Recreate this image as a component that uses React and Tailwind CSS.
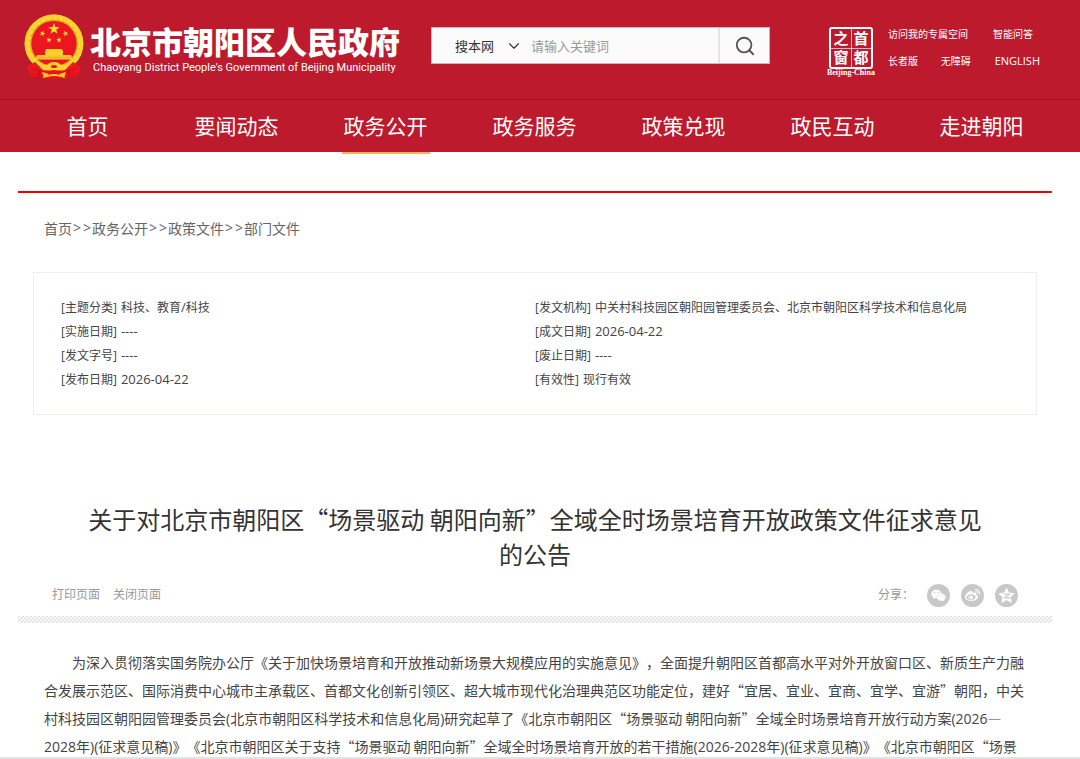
import { Search, ChevronDown } from "lucide-react";
import { FaWeixin, FaWeibo } from "react-icons/fa";

const NAV = ["首页", "要闻动态", "政务公开", "政务服务", "政策兑现", "政民互动", "走进朝阳"];
const CRUMBS = ["首页", "政务公开", "政策文件", "部门文件"];

const INFO_LEFT = [
  ["主题分类", "科技、教育/科技"],
  ["实施日期", "----"],
  ["发文字号", "----"],
  ["发布日期", "2026-04-22"],
];
const INFO_RIGHT = [
  ["发文机构", "中关村科技园区朝阳园管理委员会、北京市朝阳区科学技术和信息化局"],
  ["成文日期", "2026-04-22"],
  ["废止日期", "----"],
  ["有效性", "现行有效"],
];

const BODY =
  "为深入贯彻落实国务院办公厅《关于加快场景培育和开放推动新场景大规模应用的实施意见》，全面提升朝阳区首都高水平对外开放窗口区、新质生产力融合发展示范区、国际消费中心城市主承载区、首都文化创新引领区、超大城市现代化治理典范区功能定位，建好“宜居、宜业、宜商、宜学、宜游”朝阳，中关村科技园区朝阳园管理委员会(北京市朝阳区科学技术和信息化局)研究起草了《北京市朝阳区“场景驱动 朝阳向新”全域全时场景培育开放行动方案(2026—2028年)(征求意见稿)》《北京市朝阳区关于支持“场景驱动 朝阳向新”全域全时场景培育开放的若干措施(2026-2028年)(征求意见稿)》《北京市朝阳区“场景";

// Latin runs get Open Sans, everything else (curly quotes included) stays full width
function Mixed({ text, latin = "" }) {
  return text.split(/([\x21-\x7e]+)/).map((part, i) =>
    i % 2 ? (
      <span key={i} className={`font-['Open_Sans','Noto_Sans_CJK_SC',sans-serif] leading-none ${latin}`}>{part}</span>
    ) : (
      part
    )
  );
}

function Star({ x, y, r, rot = 0 }) {
  const pts = Array.from({ length: 10 }, (_, i) => {
    const a = ((i * 36 - 90 + rot) * Math.PI) / 180;
    const d = i % 2 ? r * 0.4 : r;
    return `${(x + d * Math.cos(a)).toFixed(2)},${(y + d * Math.sin(a)).toFixed(2)}`;
  }).join(" ");
  return <polygon points={pts} fill="#fbd931" />;
}

function Emblem() {
  return (
    <svg viewBox="0 0 60 66" className="w-[60px] h-[66px] shrink-0" aria-hidden="true">
      <ellipse cx="30" cy="29.5" rx="29.5" ry="29" fill="#e3a922" />
      <ellipse cx="30" cy="29.5" rx="27.5" ry="27.3" fill="none" stroke="#f9d22e" strokeWidth="3.5" />
      <ellipse cx="30" cy="29.5" rx="25" ry="25" fill="none" stroke="#fbd93a" strokeWidth="2" strokeDasharray="5 .8" />
      <circle cx="30" cy="29.5" r="22.6" fill="#ec1620" />
      <path d="M3 53 L11 48 L20 57 L14 62 L7 62 Z" fill="#ec1620" />
      <path d="M57 53 L49 48 L40 57 L46 62 L53 62 Z" fill="#ec1620" />
      <path d="M7 52 Q16 58 30 56 Q44 58 53 52 L52 63 Q46 61 41 65 H19 Q14 61 8 63 Z" fill="#e8111c" />
      <path d="M11 45 Q17 53 30 50 Q43 53 49 45 Q44 57 30 54 Q16 57 11 45 Z" fill="#fbd02d" />
      <path d="M10 55 L16 57 L14 63 M50 55 L44 57 L46 63" fill="none" stroke="#b80f19" strokeWidth=".8" />
      <path d="M18 58 L25 60 L20 64 Z M42 58 L35 60 L40 64 Z" fill="#fbd02d" />
      <path d="M18 64 Q30 56 42 64 L37 63 Q30 61 23 63 Z" fill="#fbd02d" />
      <ellipse cx="30" cy="52" rx="7" ry="4" fill="#fbd02d" />
      <ellipse cx="30" cy="52.5" rx="3" ry="1.5" fill="#e8111c" />
      <path d="M22 35 H38 L39 37.5 H21 Z M21 37 H39 V41 H21 Z" fill="#fbd02d" />
      <path d="M13 41 H47 L49 45.5 H11 Z" fill="#f9c928" />
      <path d="M12 43.4 H48" stroke="#e79b1c" strokeWidth=".6" />
      <Star x={30} y={15} r={6} />
      <Star x={18.5} y={19.5} r={3} rot={20} />
      <Star x={41.5} y={19.5} r={3} rot={-20} />
      <Star x={25} y={26} r={3} rot={10} />
      <Star x={35} y={26} r={3} rot={-10} />
    </svg>
  );
}

function CapitalWindow() {
  return (
    <a href="#" className="w-[50px] shrink-0 flex flex-col items-center">
      <span className="relative w-[44px] h-[42px] border-2 border-white rounded-[3px] grid grid-cols-2 grid-rows-2 text-center text-[15px] leading-[18px] font-bold">
        <span>之</span>
        <span>首</span>
        <span>窗</span>
        <span>都</span>
        <span className="absolute left-1/2 top-0 h-full w-px bg-white/70" />
        <span className="absolute top-1/2 left-0 w-full h-px bg-white/70" />
      </span>
      <span className="font-['Liberation_Serif',serif] font-bold text-[8px] leading-[8px] whitespace-nowrap">Beijing-China</span>
    </a>
  );
}

function QzoneIcon() {
  return (
    <svg viewBox="0 0 24 24" className="w-[17px] h-[17px]" aria-hidden="true">
      <path
        d="M12 1.5l3.2 7 7.6.8-5.7 5.1 1.7 7.6-6.8-3.9-6.8 3.9 1.7-7.6L1.2 9.3l7.6-.8z"
        fill="#fff"
        stroke="#fff"
        strokeLinejoin="round"
      />
      <path d="M8 10.2q4-1 8 0l-6.500 5q4 .6 7.5-.2" fill="none" stroke="#c8c8c8" strokeWidth="1.5" />
    </svg>
  );
}

function InfoColumn({ rows }) {
  return (
    <ul>
      {rows.map(([label, value]) => (
        <li key={label} className="flex gap-[4px] h-[24px] whitespace-nowrap">
          <span><Mixed text={`[${label}]`} /></span>
          <span><Mixed text={value} latin="text-[13px]" /></span>
        </li>
      ))}
    </ul>
  );
}

function ShareButton({ label, children }) {
  return (
    <button aria-label={label} className="w-[23px] h-[23px] rounded-full bg-[#c8c8c8] text-white flex items-center justify-center">
      {children}
    </button>
  );
}

function Header() {
  return (
    <header className="bg-[#bd1a2d] text-white shrink-0">
      <div className="h-[99px] flex items-start pl-[24px] pr-[40px]">
        <a href="#" className="flex mt-[14px] gap-[6px]">
          <Emblem />
          <span className="flex flex-col mt-[8px] whitespace-nowrap">
            <span className="text-[31px] leading-[38px] font-black">北京市朝阳区人民政府</span>
            <span className="pl-[3px] font-['Roboto',sans-serif] text-[11px] leading-[16px]">
              Chaoyang District People's Government of Beijing Municipality
            </span>
          </span>
        </a>

        <form className="mt-[27px] ml-[31px] w-[339px] h-[37px] flex bg-[#fbfbfb] border border-[#d9b0b4] text-[13px]" onSubmit={(e) => e.preventDefault()}>
          <div className="relative w-[99px] shrink-0">
            <select aria-label="搜索范围" className="w-full h-full appearance-none bg-transparent pl-[23px] text-[#333] outline-none">
              <option>搜本网</option>
            </select>
            <ChevronDown className="absolute right-[8px] top-[9px] w-[18px] h-[18px] text-[#333] pointer-events-none" strokeWidth={1.5} />
          </div>
          <input type="text" aria-label="关键词" placeholder="请输入关键词" className="flex-1 min-w-0 bg-transparent text-[#333] placeholder:text-[#999] outline-none" />
          <button aria-label="搜索" className="w-[51px] border-l-2 border-[#e3e3e3] text-[#555] flex items-center justify-center">
            <Search className="w-[22px] h-[22px]" strokeWidth={2} />
          </button>
        </form>

        <div className="ml-auto mt-[27px] flex gap-[12px]">
          <CapitalWindow />
          <div className="w-[152px] text-[10px] leading-[14px] flex flex-col gap-[13px] whitespace-nowrap">
            <div className="flex">
              <a href="#" className="w-[105px]">访问我的专属空间</a>
              <a href="#">智能问答</a>
            </div>
            <div className="flex">
              <a href="#" className="w-[53px]">长者版</a>
              <a href="#" className="w-[54px]">无障碍</a>
              <a href="#" className="font-['Open_Sans',sans-serif] text-[11px]">ENGLISH</a>
            </div>
          </div>
        </div>
      </div>

      <nav className="h-[53px] border-t border-[#a01222] pl-[13px] pr-[24px] flex text-[21px]">
        {NAV.map((item) => (
          <a key={item} href="#" className="flex-1 flex justify-center leading-[50px]">
            <span className={item === "政务公开" ? "h-[54px] px-[2px] border-b-2 border-[#f0b45c]" : ""}>{item}</span>
          </a>
        ))}
      </nav>
    </header>
  );
}

export default function App() {
  return (
    <div lang="zh-CN" className="h-screen flex flex-col overflow-hidden bg-white font-['Noto_Sans_CJK_SC',sans-serif] [text-spacing-trim:space-all]">
      <Header />

      <main className="flex-1 min-h-0 overflow-hidden mt-[39px] ml-[18px] mr-[28px]">
        <div className="border-t-2 border-[#f00000] pt-[24px]">
          <nav className="pl-[26px] flex text-[14px] leading-[22px] text-[#666]">
            {CRUMBS.map((c, i) => (
              <span key={c} className="flex">
                {i > 0 && <span className="px-px flex gap-[2px] font-['Open_Sans',sans-serif]"><span>&gt;</span><span>&gt;</span></span>}
                <a href="#">{c}</a>
              </span>
            ))}
          </nav>

          <section className="mt-[33px] mx-[15px] border border-[#efefe6] pt-[22px] pb-[23px] px-[27px] grid grid-cols-2 text-[12px] leading-[24px] text-[#444]">
            <InfoColumn rows={INFO_LEFT} />
            <InfoColumn rows={INFO_RIGHT} />
          </section>

          <h1 className="mt-[86px] px-[60px] text-center text-[24px] leading-[35px] text-[#333]">
            关于对北京市朝阳区“场景驱动 朝阳向新”全域全时场景培育开放政策文件征求意见的公告
          </h1>

          <div className="mt-[13px] px-[34px] h-[23px] flex items-start text-[12px] leading-[20px] text-[#999]">
            <button>打印页面</button>
            <button className="ml-[13px]">关闭页面</button>
            <span className="ml-auto mr-[13px]">分享：</span>
            <div className="flex gap-[11px]">
              <ShareButton label="微信"><FaWeixin className="w-[15px] h-[15px]" /></ShareButton>
              <ShareButton label="微博"><FaWeibo className="w-[15px] h-[15px]" /></ShareButton>
              <ShareButton label="QQ空间"><QzoneIcon /></ShareButton>
            </div>
          </div>

          <div className="mt-[9px] h-[7px] bg-[linear-gradient(135deg,#e3e3e3_25%,#fafafa_25%,#fafafa_50%,#e3e3e3_50%,#e3e3e3_75%,#fafafa_75%)] bg-[length:4px_4px]" />

          <article className="mt-[25px] pl-[26px] pr-[24px] text-[14px] leading-[28px] text-[#444] indent-[28px]">
            <p><Mixed text={BODY} /></p>
          </article>
        </div>
      </main>

      <div className="h-[2px] shrink-0 bg-[#e3e3e3]" />
    </div>
  );
}
